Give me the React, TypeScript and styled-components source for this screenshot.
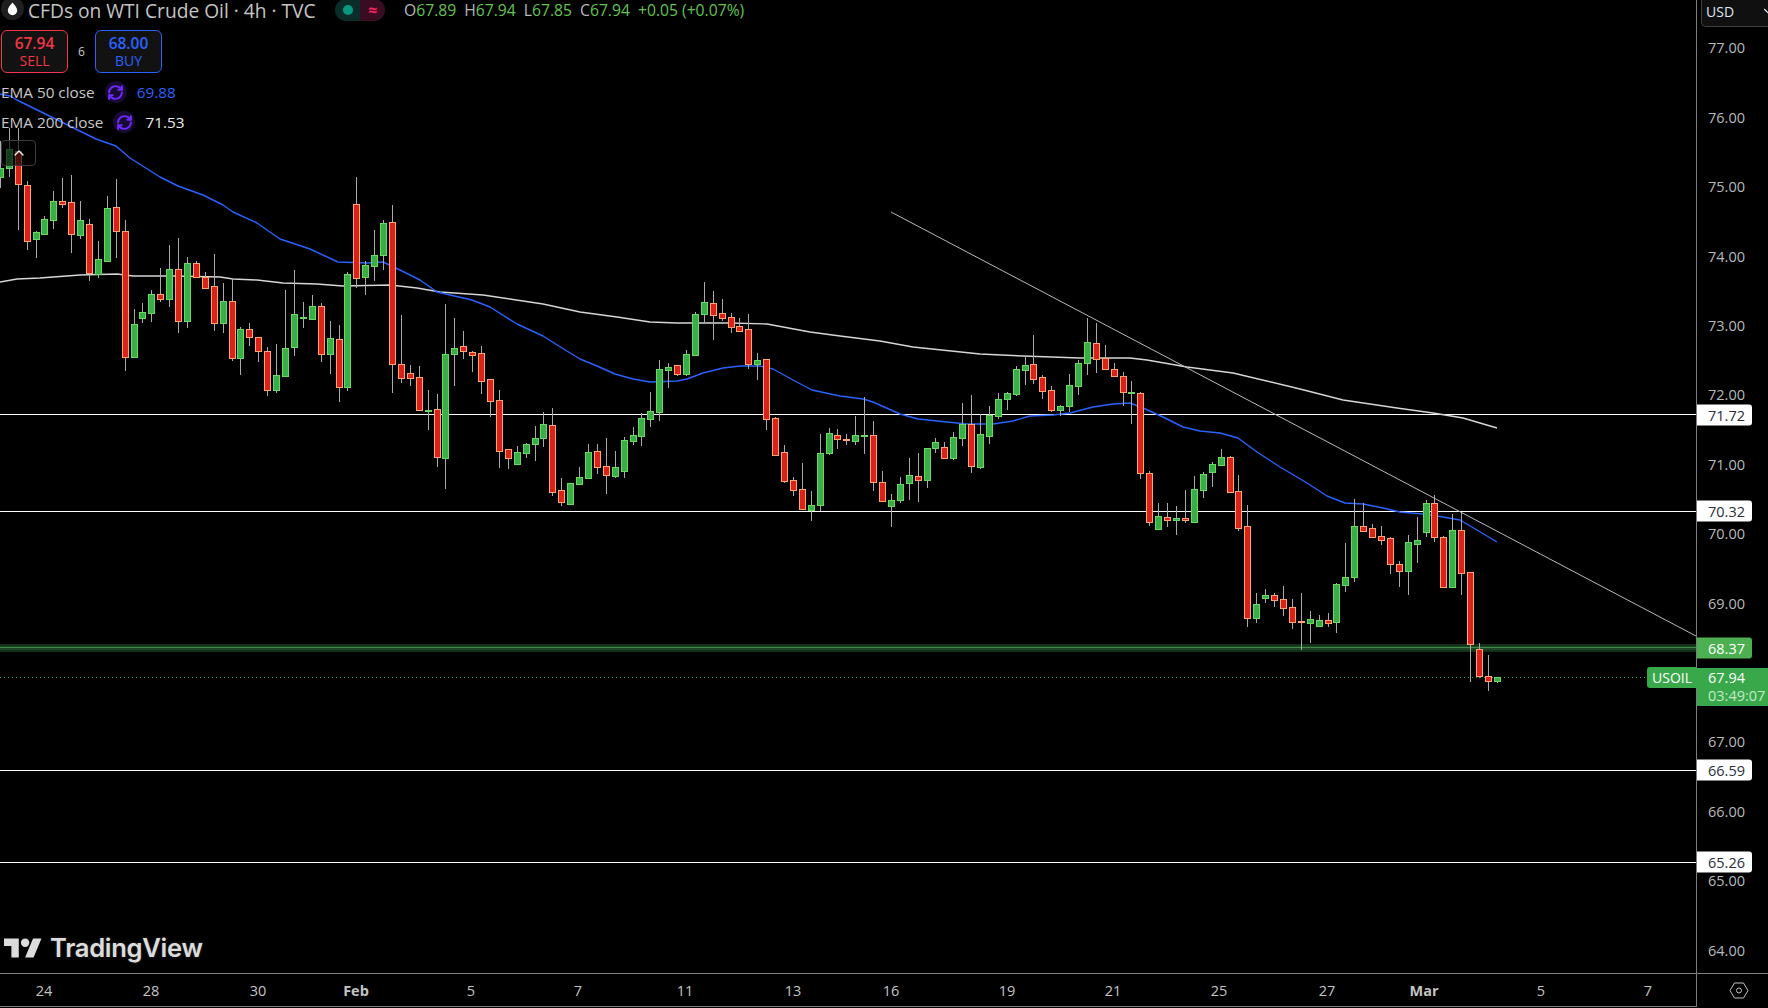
import React from 'react';
import styled, { createGlobalStyle } from 'styled-components';
import { ChevronDown, ChevronUp, RefreshCw } from 'lucide-react';

type Row = [number, number, number, number, number];

// rows are [up, wickTop, bodyTop, bodyBottom, wickBottom], in thirds of a pixel below y0
const rows = (y0: number, list: Row[]) =>
  list.map(([up, a, b, c, d]): Row => [up, y0 + a / 3, y0 + b / 3, y0 + c / 3, y0 + d / 3]);

const CANDLES: Row[] = [
  ...rows(100, [
    [1, 124, 205, 230, 263], [1, 85, 148, 205, 230], [0, 85, 153, 253, 390], [0, 243, 256, 424, 450],
    [1, 393, 397, 416, 473], [1, 348, 358, 401, 401], [1, 273, 304, 359, 387], [0, 235, 304, 311, 323],
    [0, 225, 307, 403, 458], [1, 303, 361, 404, 417], [0, 357, 373, 518, 543], [1, 423, 478, 521, 533],
    [1, 288, 325, 482, 487], [0, 237, 322, 394, 473], [0, 360, 394, 772, 812], [1, 627, 673, 770, 770],
    [1, 610, 637, 653, 668], [1, 570, 583, 640, 666], [0, 504, 583, 598, 605], [1, 435, 508, 598, 620],
    [0, 414, 508, 664, 698], [1, 471, 490, 664, 683], [0, 484, 490, 532, 533], [0, 516, 530, 563, 566],
    [0, 462, 559, 668, 692], [1, 549, 604, 670, 698], [0, 535, 604, 775, 782], [1, 682, 688, 775, 824],
    [0, 669, 688, 712, 738], [0, 712, 712, 754, 785], [0, 741, 754, 871, 887], [1, 732, 826, 871, 878],
    [1, 570, 745, 829, 830], [1, 510, 643, 742, 767], [1, 606, 652, 652, 684], [1, 585, 619, 656, 657],
    [0, 610, 619, 763, 785], [1, 663, 715, 763, 822], [0, 675, 718, 862, 905], [1, 516, 523, 862, 872],
    [0, 231, 313, 535, 563], [1, 483, 496, 532, 585], [1, 390, 466, 499, 543], [1, 360, 370, 466, 510],
    [0, 315, 367, 793, 878], [0, 645, 793, 835, 848], [0, 796, 820, 835, 857], [0, 798, 832, 931, 932],
    [1, 870, 929, 931, 990], [0, 882, 928, 1072, 1100], [1, 612, 763, 1075, 1168],
  ]),
  ...rows(260, [
    [1, 174, 265, 281, 378], [0, 213, 259, 272, 297], [0, 272, 275, 284, 335], [0, 258, 280, 362, 402],
    [0, 358, 358, 422, 470], [0, 390, 421, 572, 624], [0, 566, 568, 593, 627], [1, 558, 577, 611, 611],
    [1, 549, 553, 578, 594], [1, 498, 535, 551, 603], [1, 456, 493, 533, 561], [0, 444, 496, 695, 708],
    [0, 654, 691, 725, 738], [1, 670, 670, 731, 731], [1, 621, 652, 671, 671], [1, 552, 577, 653, 653],
    [0, 552, 574, 620, 642], [0, 534, 619, 644, 702], [1, 573, 622, 647, 653], [1, 531, 541, 632, 654],
    [1, 501, 526, 542, 555], [1, 459, 475, 527, 558], [1, 396, 454, 476, 501], [1, 300, 328, 455, 483],
    [1, 309, 322, 329, 384], [0, 316, 316, 341, 348], [1, 270, 283, 341, 348], [1, 156, 163, 284, 284],
    [1, 66, 127, 161, 190], [0, 93, 130, 164, 240], [0, 117, 160, 173, 183], [0, 159, 172, 200, 219],
    [0, 174, 199, 212, 213], [0, 162, 208, 311, 327], [1, 279, 301, 311, 360], [0, 298, 298, 476, 510],
    [0, 472, 475, 584, 588], [0, 555, 577, 662, 668], [0, 651, 661, 689, 708], [0, 609, 688, 746, 747],
    [1, 693, 736, 749, 782], [1, 522, 580, 734, 754], [1, 504, 520, 578, 584], [0, 507, 526, 536, 567],
    [0, 522, 538, 538, 555], [1, 468, 526, 542, 555], [1, 411, 526, 529, 582], [0, 483, 526, 665, 693],
    [0, 633, 667, 722, 725],
  ]),
  ...rows(300, [
    [1, 583, 601, 617, 681], [1, 531, 553, 599, 609], [1, 474, 526, 550, 600], [0, 459, 529, 539, 606],
    [1, 444, 445, 539, 564], [1, 414, 427, 443, 459], [0, 426, 442, 473, 473], [1, 396, 412, 473, 480],
    [1, 309, 373, 413, 438], [0, 285, 373, 499, 519], [1, 343, 403, 500, 507], [1, 318, 346, 407, 432],
    [1, 279, 298, 347, 357], [1, 276, 280, 296, 330], [1, 198, 208, 281, 288], [1, 168, 195, 209, 255],
    [0, 105, 193, 236, 252], [0, 225, 232, 272, 297], [0, 258, 271, 329, 336], [1, 315, 319, 329, 348],
    [1, 222, 256, 317, 336], [1, 180, 190, 257, 285], [1, 54, 127, 190, 225], [0, 69, 130, 178, 219],
    [0, 135, 175, 208, 210], [0, 189, 208, 229, 231], [0, 216, 229, 277, 318], [1, 243, 277, 277, 372],
    [0, 276, 280, 520, 537], [0, 513, 520, 665, 678], [1, 609, 649, 688, 690], [0, 609, 652, 661, 681],
    [1, 618, 655, 661, 705], [0, 570, 655, 661, 669], [1, 528, 568, 665, 668], [1, 516, 523, 571, 594],
    [1, 486, 493, 517, 561], [1, 447, 472, 496, 498], [0, 468, 472, 575, 576], [0, 525, 574, 683, 693],
  ]),
  ...rows(440, [
    [0, 195, 259, 533, 560], [1, 459, 493, 533, 549], [1, 447, 466, 473, 489], [0, 459, 466, 479, 501],
    [0, 438, 478, 503, 528], [0, 477, 502, 545, 567], [0, 459, 544, 544, 630], [1, 513, 538, 548, 609],
    [1, 525, 541, 557, 561], [0, 519, 541, 548, 561], [1, 430, 433, 545, 579], [1, 309, 412, 434, 456],
    [1, 177, 259, 410, 426], [0, 189, 259, 272, 276], [0, 252, 265, 290, 291], [0, 258, 289, 299, 315],
    [0, 292, 295, 371, 402], [0, 363, 373, 392, 441], [1, 285, 307, 392, 465], [1, 231, 301, 311, 369],
    [1, 180, 190, 275, 291], [0, 165, 190, 290, 306], [0, 288, 292, 440, 444], [1, 222, 271, 440, 441],
    [0, 216, 271, 398, 465], [0, 397, 397, 611, 726], [0, 609, 628, 707, 714], [0, 645, 709, 722, 753],
    [1, 712, 712, 722, 729],
  ]),
];

const EMA_50 = '0,94 10,96 17,100 96,139 116,146 130,158 160,177 178,186 203,195 223,205 233,212 257,223 280,239 310,249 338,262 367,263 383,262 400,270 420,280 437,292 472,300 490,307 517,324 543,336 562,348 580,359 597,366 615,374 633,379 650,382 677,381 687,379 703,373 723,368 740,366 760,366 773,369 793,380 812,390 840,396 863,399 873,402 900,414 918,419 947,422 967,424 993,424 1013,421 1030,416 1053,415 1070,413 1093,407 1113,404 1130,403 1143,408 1163,417 1183,427 1200,431 1220,433 1238,438 1257,452 1280,467 1307,483 1327,496 1345,503 1363,504 1383,508 1400,512 1423,514 1443,517 1460,520 1477,530 1497,542';
const EMA_200 = '0,282 17,279 40,278 80,275 117,274 133,276 173,276 220,277 233,279 257,280 283,283 317,284 343,286 390,285 417,288 440,292 483,295 543,304 580,312 617,317 650,322 677,323 730,323 767,324 810,332 840,336 880,341 913,347 980,354 1023,356 1080,358 1130,358 1147,360 1187,367 1233,373 1300,389 1343,400 1397,408 1433,413 1463,418 1497,428';

const LEVELS = [414.5, 511.5, 770.5, 862.5];
const AXIS_TICKS = [77, 76, 75, 74, 73, 72, 71, 70, 69, 67, 66, 65, 64];
const BADGES = [
  { label: '71.72', y: 415 },
  { label: '70.32', y: 511 },
  { label: '66.59', y: 770 },
  { label: '65.26', y: 862 },
];
const DATES = [
  { label: '24', x: 44 }, { label: '28', x: 151 }, { label: '30', x: 258 }, { label: 'Feb', x: 356, strong: true },
  { label: '5', x: 471 }, { label: '7', x: 578 }, { label: '11', x: 685 }, { label: '13', x: 793 },
  { label: '16', x: 891 }, { label: '19', x: 1007 }, { label: '21', x: 1113 }, { label: '25', x: 1219 },
  { label: '27', x: 1327 }, { label: 'Mar', x: 1424, strong: true }, { label: '5', x: 1541 }, { label: '7', x: 1648 },
];

const priceToY = (price: number) => 48.4 + (77 - price) * 69.4;

const GlobalStyle = createGlobalStyle`
  html, body {
    margin: 0;
    height: 100%;
    background: #000;
    overflow: hidden;
  }
`;

const Page = styled.div`
  display: grid;
  grid-template-columns: 1696px 72px;
  grid-template-rows: 973px 34px;
  width: 1768px;
  height: 1008px;
  background: #000;
  color: #c8c8c8;
  font-family: 'Open Sans', 'Liberation Sans', sans-serif;
`;

const ChartPane = styled.div`
  position: relative;
  overflow: hidden;
`;

const ChartSvg = styled.svg`
  display: block;
`;

const Legend = styled.div`
  position: absolute;
  top: 0;
  left: 1px;
  display: flex;
  flex-direction: column;
  align-items: flex-start;
`;

const TitleRow = styled.div`
  display: flex;
  align-items: center;
  height: 21px;
`;

const SymbolIcon = styled.svg`
  flex: none;
  width: 23px;
  height: 23px;
  margin-right: 4px;
`;

const Title = styled.span`
  width: 307px;
  font-size: 19.2px;
  line-height: 21px;
  color: #c4c4c4;
  white-space: nowrap;
`;

const StatusPill = styled.div`
  display: flex;
  width: 50px;
  height: 22px;
  margin-top: -2px;
  border-radius: 11px;
  overflow: hidden;
`;

const StatusHalf = styled.div<{ $bg: string; $color: string }>`
  flex: 1;
  display: flex;
  align-items: center;
  justify-content: center;
  background: ${({ $bg }) => $bg};
  color: ${({ $color }) => $color};
  font-size: 16px;
  font-weight: 700;
`;

const StatusDot = styled.span`
  width: 10px;
  height: 10px;
  border-radius: 50%;
  background: #089981;
`;

const Ohlc = styled.div`
  display: flex;
  gap: 8px;
  margin-left: 19px;
  font-size: 15.7px;
  line-height: 21px;
  color: #62c451;
  white-space: nowrap;
`;

const OhlcLabel = styled.span`
  color: #b8b8b8;
`;

const TradeRow = styled.div`
  display: flex;
  align-items: center;
  margin: 9px 0 7px;
`;

const TradeButton = styled.div<{ $color: string }>`
  display: flex;
  flex-direction: column;
  align-items: center;
  justify-content: center;
  box-sizing: border-box;
  width: 67px;
  height: 43px;
  border: 1px solid ${({ $color }) => $color};
  border-radius: 6px;
  background: #121212;
  color: ${({ $color }) => $color};
  line-height: 17px;
`;

const TradePrice = styled.span`
  font-size: 15.5px;
  font-weight: 600;
`;

const TradeSide = styled.span`
  font-size: 14px;
`;

const Spread = styled.span`
  width: 27px;
  font-size: 12px;
  text-align: center;
`;

const EmaRow = styled.div`
  display: flex;
  align-items: center;
  height: 24px;
  margin-bottom: 6px;
  font-size: 15.3px;
  color: #c8c8c8;
`;

const EmaBadge = styled.span`
  display: flex;
  align-items: center;
  justify-content: center;
  width: 22px;
  height: 22px;
  margin: 0 10px;
  border-radius: 50%;
  background: #170b33;
  color: #6f2bff;
`;

const EmaValue = styled.span<{ $color: string }>`
  color: ${({ $color }) => $color};
`;

const CollapseButton = styled.div`
  display: flex;
  align-items: center;
  justify-content: center;
  box-sizing: border-box;
  width: 35px;
  height: 26px;
  border: 1px solid #3c3c3c;
  border-radius: 4px;
  background: rgba(0, 0, 0, 0.65);
  color: #f0f0f0;
`;

const Brand = styled.div`
  position: absolute;
  left: 4px;
  top: 932px;
  display: flex;
  align-items: center;
  gap: 8px;
`;

const BrandName = styled.span`
  font-family: Inter, 'Liberation Sans', sans-serif;
  font-size: 25.6px;
  font-weight: 600;
  letter-spacing: -0.3px;
  color: #dcdcdc;
  text-shadow: 0 0 3px #333;
`;

const PriceAxis = styled.div`
  position: relative;
  border-left: 1px solid #7d7d7d;
`;

const CurrencyButton = styled.div`
  display: flex;
  align-items: center;
  justify-content: space-between;
  box-sizing: border-box;
  height: 27px;
  margin-left: 4px;
  padding: 0 0 4px 4px;
  border: 1px solid #3f3f3f;
  border-width: 0 0 1px 1px;
  border-radius: 0 0 0 5px;
  background: #101010;
  color: #dfe6f0;
  font-size: 14px;
  overflow: hidden;
`;

const CurrencyChevron = styled(ChevronDown)`
  flex: none;
  margin-right: -7px;
`;

const AxisTick = styled.span`
  position: absolute;
  left: 11px;
  font-size: 14.5px;
  line-height: 20px;
  color: #b9b9b9;
  transform: translateY(-50%);
`;

const LevelBadge = styled.div<{ $bg: string; $color: string }>`
  position: absolute;
  left: 0;
  width: 55px;
  height: 21px;
  padding-left: 11px;
  box-sizing: border-box;
  border-radius: 0 3px 3px 0;
  background: ${({ $bg }) => $bg};
  color: ${({ $color }) => $color};
  font-size: 14.5px;
  line-height: 21px;
  transform: translateY(-50%);
`;

const SymbolTag = styled.div`
  position: absolute;
  right: 100%;
  top: 667px;
  width: 50px;
  height: 21px;
  border-radius: 3px 0 0 3px;
  background: #39a84a;
  color: #fff;
  font-size: 14px;
  line-height: 21px;
  text-align: center;
`;

const LastPrice = styled.div`
  position: absolute;
  left: 0;
  right: 0;
  top: 668px;
  height: 38px;
  padding-left: 11px;
  box-sizing: border-box;
  background: #39a84a;
  color: #fff;
  font-size: 14.5px;
  line-height: 20px;
`;

const Countdown = styled.div`
  margin-top: -2px;
  color: #c4e8c9;
  font-size: 14.5px;
  white-space: nowrap;
`;

const TimeAxis = styled.div`
  position: relative;
  border-top: 1px solid #7d7d7d;
  border-bottom: 1px solid #7d7d7d;
`;

const DateLabel = styled.span<{ $strong?: boolean }>`
  position: absolute;
  top: 7px;
  font-size: 14.5px;
  line-height: 20px;
  font-weight: ${({ $strong }) => ($strong ? 700 : 400)};
  color: #c4c4c4;
  transform: translateX(-50%);
`;

const AxisCorner = styled.div`
  display: flex;
  align-items: center;
  justify-content: center;
  padding-left: 12px;
  border-left: 1px solid #7d7d7d;
  border-top: 1px solid #7d7d7d;
  color: #c4c4c4;
`;

const Candle: React.FC<{ index: number; row: Row }> = ({ index, row }) => {
  const [up, wickTop, bodyTop, bodyBottom, wickBottom] = row;
  const x = Math.floor(0.42 + 8.91 * index);
  const top = Math.round(bodyTop);
  const height = Math.max(Math.round(bodyBottom) - top, 1);
  return (
    <g shapeRendering="crispEdges">
      <line x1={x + 0.5} x2={x + 0.5} y1={Math.round(wickTop)} y2={Math.round(wickBottom)} stroke="#aaaaaa" />
      <rect
        x={x - 2.5}
        y={top + 0.5}
        width={6}
        height={height}
        fill={up ? '#39ae48' : '#d9231a'}
        stroke={up ? '#69d95e' : '#ffa56e'}
      />
    </g>
  );
};

const App: React.FC = () => {
  return (
    <Page>
      <GlobalStyle />
      <ChartPane>
        <ChartSvg width={1696} height={973}>
          {LEVELS.map((y) => (
            <line key={y} x1={0} x2={1696} y1={y} y2={y} stroke="#ffffff" shapeRendering="crispEdges" />
          ))}
          <rect x={0} y={644} width={1696} height={8} fill="#12301a" />
          <rect x={0} y={646} width={1696} height={4} fill="#1c4425" />
          <line x1={0} x2={1696} y1={647.5} y2={647.5} stroke="#3f8a48" shapeRendering="crispEdges" />
          <line x1={0} x2={1646} y1={677.5} y2={677.5} stroke="#3ca64b" strokeDasharray="1 3" />
          <polyline points={EMA_200} fill="none" stroke="#d6d6d6" strokeWidth={1.4} strokeLinejoin="round" />
          <polyline points={EMA_50} fill="none" stroke="#2962ff" strokeWidth={1.4} strokeLinejoin="round" />
          {CANDLES.map((row, i) => (
            <Candle key={i} index={i} row={row} />
          ))}
          <line x1={891} y1={212} x2={1696} y2={636} stroke="#b8b8b8" strokeWidth={1} />
        </ChartSvg>

        <Legend>
          <TitleRow>
            <SymbolIcon viewBox="0 0 23 23">
              <circle cx="11.5" cy="9.5" r="11.5" fill="#1f1f1f" />
              <path d="M11.5 3.5c2.8 3.2 4.7 5.6 4.7 8a4.7 4.7 0 0 1-9.4 0c0-2.4 1.9-4.8 4.7-8z" fill="#fff" />
            </SymbolIcon>
            <Title>CFDs on WTI Crude Oil · 4h · TVC</Title>
            <StatusPill>
              <StatusHalf $bg="#0b2d2a" $color="#089981">
                <StatusDot />
              </StatusHalf>
              <StatusHalf $bg="#3a0c22" $color="#f7255f">
                ≈
              </StatusHalf>
            </StatusPill>
            <Ohlc>
              <span>
                <OhlcLabel>O</OhlcLabel>67.89
              </span>
              <span>
                <OhlcLabel>H</OhlcLabel>67.94
              </span>
              <span>
                <OhlcLabel>L</OhlcLabel>67.85
              </span>
              <span>
                <OhlcLabel>C</OhlcLabel>67.94
              </span>
              <span>+0.05 (+0.07%)</span>
            </Ohlc>
          </TitleRow>

          <TradeRow>
            <TradeButton $color="#f23645">
              <TradePrice>67.94</TradePrice>
              <TradeSide>SELL</TradeSide>
            </TradeButton>
            <Spread>6</Spread>
            <TradeButton $color="#2962ff">
              <TradePrice>68.00</TradePrice>
              <TradeSide>BUY</TradeSide>
            </TradeButton>
          </TradeRow>

          <EmaRow>
            EMA 50 close
            <EmaBadge>
              <RefreshCw size={17} strokeWidth={2.8} />
            </EmaBadge>
            <EmaValue $color="#2962ff">69.88</EmaValue>
          </EmaRow>
          <EmaRow>
            EMA 200 close
            <EmaBadge>
              <RefreshCw size={17} strokeWidth={2.8} />
            </EmaBadge>
            <EmaValue $color="#ececec">71.53</EmaValue>
          </EmaRow>

          <CollapseButton>
            <ChevronUp size={16} />
          </CollapseButton>
        </Legend>

        <Brand>
          <svg width="38" height="20" viewBox="0 4 36 18">
            <path d="M14 22H7V11H0V4h14v18zM28 22h-8l7.5-18h8L28 22z" fill="#dcdcdc" />
            <circle cx="20" cy="8" r="4" fill="#dcdcdc" />
          </svg>
          <BrandName>TradingView</BrandName>
        </Brand>
      </ChartPane>

      <PriceAxis>
        <CurrencyButton>
          USD
          <CurrencyChevron size={14} />
        </CurrencyButton>
        {AXIS_TICKS.map((price) => (
          <AxisTick key={price} style={{ top: priceToY(price) }}>
            {price.toFixed(2)}
          </AxisTick>
        ))}
        {BADGES.map((badge) => (
          <LevelBadge key={badge.label} $bg="#ffffff" $color="#2a2e39" style={{ top: badge.y }}>
            {badge.label}
          </LevelBadge>
        ))}
        <LevelBadge $bg="#4caf50" $color="#ffffff" style={{ top: 648 }}>
          68.37
        </LevelBadge>
        <SymbolTag>USOIL</SymbolTag>
        <LastPrice>
          67.94
          <Countdown>03:49:07</Countdown>
        </LastPrice>
      </PriceAxis>

      <TimeAxis>
        {DATES.map((date) => (
          <DateLabel key={date.x} $strong={date.strong} style={{ left: date.x }}>
            {date.label}
          </DateLabel>
        ))}
      </TimeAxis>
      <AxisCorner>
        <svg width="20" height="17" viewBox="0 0 20 17" fill="none" stroke="currentColor" strokeWidth="1">
          <path d="M1 8.5 5.5 1h9l4.5 7.5L14.5 16h-9z" />
          <circle cx="10" cy="8.5" r="2.5" />
        </svg>
      </AxisCorner>
    </Page>
  );
};

export default App;
